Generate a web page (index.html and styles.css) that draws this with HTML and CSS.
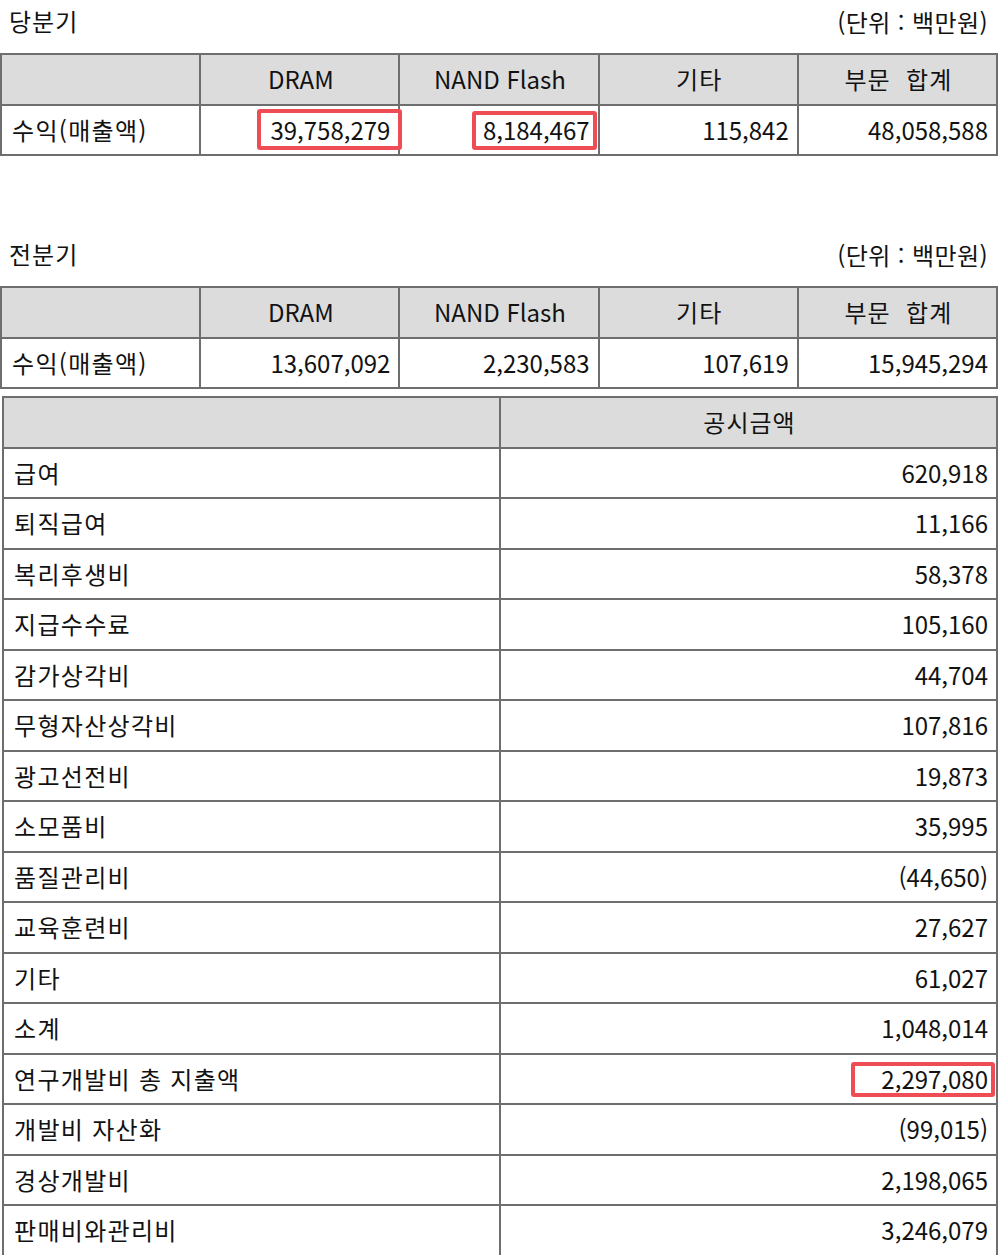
FILE: index.html
```html
<!DOCTYPE html>
<html lang="ko">
<head>
<meta charset="utf-8">
<link rel="stylesheet" href="styles.css">
</head>
<body>
<div class="page">
  <section class="block first">
    <div class="title-row"><span class="title">당분기</span><span class="unit">(단위 : 백만원)</span></div>
    <table class="seg">
      <colgroup><col><col><col><col><col></colgroup>
      <tr class="head"><th></th><th>DRAM</th><th>NAND Flash</th><th class="ko">기타</th><th class="ko">부문&nbsp; 합계</th></tr>
      <tr><td class="label">수익(매출액)</td><td class="num"><span class="mark m1">39,758,279</span></td><td class="num"><span class="mark m2">8,184,467</span></td><td class="num">115,842</td><td class="num">48,058,588</td></tr>
    </table>
  </section>
  <section class="block second">
    <div class="title-row"><span class="title">전분기</span><span class="unit">(단위 : 백만원)</span></div>
    <table class="seg">
      <colgroup><col><col><col><col><col></colgroup>
      <tr class="head"><th></th><th>DRAM</th><th>NAND Flash</th><th class="ko">기타</th><th class="ko">부문&nbsp; 합계</th></tr>
      <tr><td class="label">수익(매출액)</td><td class="num">13,607,092</td><td class="num">2,230,583</td><td class="num">107,619</td><td class="num">15,945,294</td></tr>
    </table>
  </section>
  <table class="cost">
    <tr class="head"><th></th><th class="ko">공시금액</th></tr>
    <tr><td class="label">급여</td><td class="num">620,918</td></tr>
    <tr><td class="label">퇴직급여</td><td class="num">11,166</td></tr>
    <tr><td class="label">복리후생비</td><td class="num">58,378</td></tr>
    <tr><td class="label">지급수수료</td><td class="num">105,160</td></tr>
    <tr><td class="label">감가상각비</td><td class="num">44,704</td></tr>
    <tr><td class="label">무형자산상각비</td><td class="num">107,816</td></tr>
    <tr><td class="label">광고선전비</td><td class="num">19,873</td></tr>
    <tr><td class="label">소모품비</td><td class="num">35,995</td></tr>
    <tr><td class="label">품질관리비</td><td class="num">(44,650)</td></tr>
    <tr><td class="label">교육훈련비</td><td class="num">27,627</td></tr>
    <tr><td class="label">기타</td><td class="num">61,027</td></tr>
    <tr><td class="label">소계</td><td class="num">1,048,014</td></tr>
    <tr><td class="label">연구개발비 총 지출액</td><td class="num"><span class="mark m3">2,297,080</span></td></tr>
    <tr><td class="label">개발비 자산화</td><td class="num">(99,015)</td></tr>
    <tr><td class="label">경상개발비</td><td class="num">2,198,065</td></tr>
    <tr><td class="label">판매비와관리비</td><td class="num">3,246,079</td></tr>
  </table>
</div>
</body>
</html>
```

FILE: styles.css
```css
html, body {
  margin: 0;
  padding: 0;
  background: #fff;
}
body {
  font-family: "Noto Sans CJK KR", "Noto Sans", sans-serif;
  font-size: 24px;
  color: #121212;
  width: 1000px;
  height: 1255px;
  overflow: hidden;
}
.page {
  display: flex;
  flex-direction: column;
  padding-right: 2px;
}
.title-row {
  display: flex;
  justify-content: space-between;
  align-items: center;
  height: 44px;
  padding: 0 10px 9px 9px;
  line-height: 1;
}
.title-row .title {
  margin-top: -3px;
  letter-spacing: 1px;
}
.title-row .unit {
  letter-spacing: 0.4px;
}
.block.second {
  margin-top: 77px;
}
table {
  border-collapse: collapse;
  width: 100%;
  table-layout: fixed;
}
.seg {
  border: 2px solid #2e2e2e;
}
.seg col {
  width: 20%;
}
th, td {
  border: 2px solid #6e6e6e;
  height: 48.5px;
  padding: 0 8px 0 10px;
  line-height: 1;
  white-space: nowrap;
}
th {
  background: #dcdcdc;
  font-weight: normal;
  text-align: center;
}
th.ko {
  letter-spacing: 1px;
}
td.num {
  text-align: right;
}
td.label {
  text-align: left;
  letter-spacing: 1.3px;
}
.cost {
  margin-top: 7px;
  margin-left: 2px;
  width: calc(100% - 2px);
  border: 2px solid #2e2e2e;
  border-bottom: none;
}
.cost tr:last-child td {
  border-bottom: none;
}
.mark {
  position: relative;
  display: inline-block;
}
.mark::after {
  content: "";
  position: absolute;
  box-sizing: border-box;
  border: 4px solid #ef4d55;
  border-radius: 3px;
}
.m1::after {
  right: -12px;
  width: 145px;
  top: -9px;
  bottom: -8px;
}
.m2::after {
  right: -7px;
  width: 125px;
  top: -7px;
  bottom: -8px;
}
.m3::after {
  right: -7px;
  width: 144px;
  top: -5px;
  bottom: -6px;
}
```
